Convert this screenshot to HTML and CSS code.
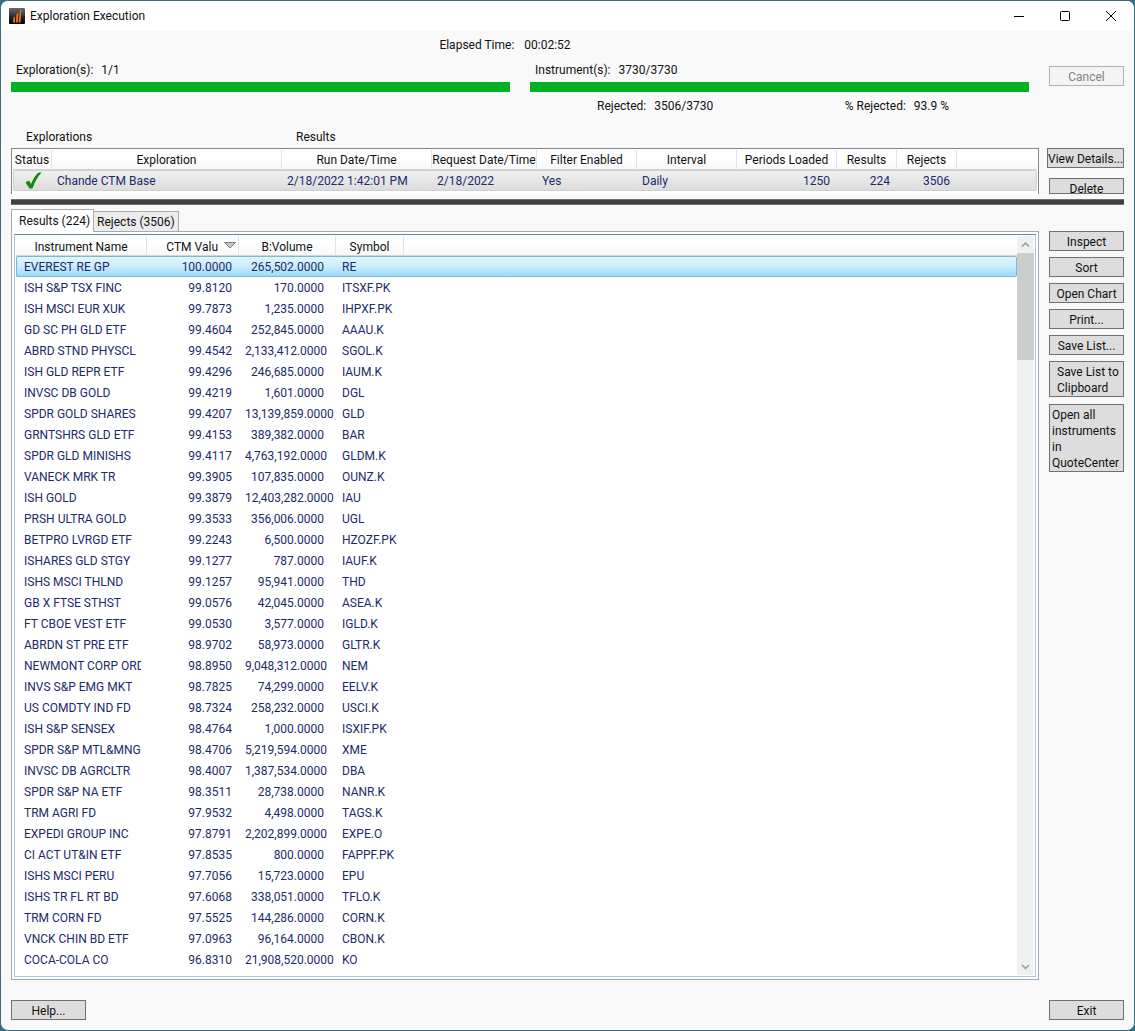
FILE: index.html
```html
<!DOCTYPE html>
<html lang="en">
<head>
  <meta charset="UTF-8" />
  <meta name="viewport" content="width=device-width, initial-scale=1.0" />
  <title>Exploration Execution</title>
  <link rel="stylesheet" href="styles.css">
</head>
<body>
  <div class="window">
    <header class="titlebar">
      <svg class="app-icon" viewBox="0 0 16 16" width="16" height="16">
        <defs>
          <linearGradient id="iconBg" x1="0" y1="0" x2="0" y2="1">
            <stop offset="0" stop-color="#6a6a6a" />
            <stop offset="0.6" stop-color="#222" />
            <stop offset="1" stop-color="#000" />
          </linearGradient>
        </defs>
        <rect width="16" height="16" rx="1" fill="url(#iconBg)" />
        <path d="M4.500 9.500l1.500-1v6H4z M7.500 6l2-1.500-.8 10H6.800z M11 2.500l1.500-1L11.500 14.500H9.500z" fill="#e8761c" />
      </svg>
      <h1>Exploration Execution</h1>
      <div class="window-buttons">
        <button aria-label="Minimize"><svg width="12" height="12" viewBox="0 0 12 12"><path d="M1 6.500h10" /></svg></button>
        <button aria-label="Maximize"><svg width="12" height="12" viewBox="0 0 12 12"><rect x="1.500" y="1.500" width="9" height="9" rx="1" /></svg></button>
        <button aria-label="Close"><svg width="12" height="12" viewBox="0 0 12 12"><path d="M1 1l10 10M11 1L1 11" /></svg></button>
      </div>
    </header>

    <main class="content">
      <!-- Progress -->
      <section class="progress-area">
        <div class="progress-main">
          <p class="elapsed"><span>Elapsed Time:</span><span>00:02:52</span></p>
          <div class="progress-item">
            <p><span>Exploration(s):</span><span>1/1</span></p>
            <div class="bar"></div>
          </div>
          <div class="progress-item">
            <p><span>Instrument(s):</span><span>3730/3730</span></p>
            <div class="bar"></div>
            <div class="rejected">
              <p><span>Rejected:</span><span>3506/3730</span></p>
              <p><span>% Rejected:</span><span>93.9 %</span></p>
            </div>
          </div>
        </div>
        <div class="side cancel-side">
          <button class="btn" disabled>Cancel</button>
        </div>
      </section>

      <!-- Explorations -->
      <div class="labels"><span>Explorations</span><span>Results</span></div>
      <section class="explorations">
        <div class="exploration-box">
          <table class="grid exploration-grid">
            <colgroup>
              <col class="c-status"><col class="c-exploration"><col class="c-run"><col class="c-request"><col class="c-flag"><col class="c-flag"><col class="c-flag"><col class="c-count"><col class="c-count"><col>
            </colgroup>
            <thead>
              <tr><th>Status</th><th>Exploration</th><th>Run Date/Time</th><th>Request Date/Time</th><th>Filter Enabled</th><th>Interval</th><th>Periods Loaded</th><th>Results</th><th>Rejects</th><th></th></tr>
            </thead>
            <tbody>
              <tr class="inactive">
                <td class="status"><svg width="18" height="18" viewBox="0 0 18 18"><path d="M1.500 10.500l3.500-2 2 3.500C9 7 11.500 3 14.500 0.500h3C13.500 5 10.500 10.500 8.500 16.500H5.500z" fill="#138a13" /></svg></td>
                <td>Chande CTM Base</td><td>2/18/2022 1:42:01 PM</td><td>2/18/2022</td><td>Yes</td><td>Daily</td><td class="num">1250</td><td class="num">224</td><td class="num">3506</td><td></td>
              </tr>
            </tbody>
          </table>
        </div>
        <div class="side">
          <button class="btn details">View Details...</button>
          <button class="btn cut">Delete</button>
        </div>
      </section>

      <div class="splitter"></div>

      <!-- Results -->
      <section class="results">
        <div class="tab-area">
          <div class="tabs" role="tablist">
            <button class="tab active" role="tab" aria-selected="true">Results (224)</button>
            <button class="tab" role="tab" aria-selected="false">Rejects (3506)</button>
          </div>
          <div class="tab-panel">
            <div class="list">
              <div class="list-view">
                <table class="grid result-grid">
                  <colgroup>
                    <col class="c-name"><col class="c-value"><col class="c-volume"><col class="c-symbol"><col>
                  </colgroup>
                  <thead>
                    <tr>
                      <th>Instrument Name</th>
                      <th class="sorted">CTM Valu<svg class="sort-arrow" width="12" height="7" viewBox="0 0 12 7"><path d="M.5.5h11L6 6z" fill="#c4c4c4" stroke="#808080" /></svg></th>
                      <th>B:Volume</th>
                      <th>Symbol</th>
                      <th></th>
                    </tr>
                  </thead>
                  <tbody>
                    <tr class="selected"><td><span>EVEREST RE GP</span></td><td>100.0000</td><td>265,502.0000</td><td>RE</td><td></td></tr>
                    <tr><td><span>ISH S&amp;P TSX FINC</span></td><td>99.8120</td><td>170.0000</td><td>ITSXF.PK</td><td></td></tr>
                    <tr><td><span>ISH MSCI EUR XUK</span></td><td>99.7873</td><td>1,235.0000</td><td>IHPXF.PK</td><td></td></tr>
                    <tr><td><span>GD SC PH GLD ETF</span></td><td>99.4604</td><td>252,845.0000</td><td>AAAU.K</td><td></td></tr>
                    <tr><td><span>ABRD STND PHYSCL</span></td><td>99.4542</td><td>2,133,412.0000</td><td>SGOL.K</td><td></td></tr>
                    <tr><td><span>ISH GLD REPR ETF</span></td><td>99.4296</td><td>246,685.0000</td><td>IAUM.K</td><td></td></tr>
                    <tr><td><span>INVSC DB GOLD</span></td><td>99.4219</td><td>1,601.0000</td><td>DGL</td><td></td></tr>
                    <tr><td><span>SPDR GOLD SHARES</span></td><td>99.4207</td><td>13,139,859.0000</td><td>GLD</td><td></td></tr>
                    <tr><td><span>GRNTSHRS GLD ETF</span></td><td>99.4153</td><td>389,382.0000</td><td>BAR</td><td></td></tr>
                    <tr><td><span>SPDR GLD MINISHS</span></td><td>99.4117</td><td>4,763,192.0000</td><td>GLDM.K</td><td></td></tr>
                    <tr><td><span>VANECK MRK TR</span></td><td>99.3905</td><td>107,835.0000</td><td>OUNZ.K</td><td></td></tr>
                    <tr><td><span>ISH GOLD</span></td><td>99.3879</td><td>12,403,282.0000</td><td>IAU</td><td></td></tr>
                    <tr><td><span>PRSH ULTRA GOLD</span></td><td>99.3533</td><td>356,006.0000</td><td>UGL</td><td></td></tr>
                    <tr><td><span>BETPRO LVRGD ETF</span></td><td>99.2243</td><td>6,500.0000</td><td>HZOZF.PK</td><td></td></tr>
                    <tr><td><span>ISHARES GLD STGY</span></td><td>99.1277</td><td>787.0000</td><td>IAUF.K</td><td></td></tr>
                    <tr><td><span>ISHS MSCI THLND</span></td><td>99.1257</td><td>95,941.0000</td><td>THD</td><td></td></tr>
                    <tr><td><span>GB X FTSE STHST</span></td><td>99.0576</td><td>42,045.0000</td><td>ASEA.K</td><td></td></tr>
                    <tr><td><span>FT CBOE VEST ETF</span></td><td>99.0530</td><td>3,577.0000</td><td>IGLD.K</td><td></td></tr>
                    <tr><td><span>ABRDN ST PRE ETF</span></td><td>98.9702</td><td>58,973.0000</td><td>GLTR.K</td><td></td></tr>
                    <tr><td><span>NEWMONT CORP ORD</span></td><td>98.8950</td><td>9,048,312.0000</td><td>NEM</td><td></td></tr>
                    <tr><td><span>INVS S&amp;P EMG MKT</span></td><td>98.7825</td><td>74,299.0000</td><td>EELV.K</td><td></td></tr>
                    <tr><td><span>US COMDTY IND FD</span></td><td>98.7324</td><td>258,232.0000</td><td>USCI.K</td><td></td></tr>
                    <tr><td><span>ISH S&amp;P SENSEX</span></td><td>98.4764</td><td>1,000.0000</td><td>ISXIF.PK</td><td></td></tr>
                    <tr><td><span>SPDR S&amp;P MTL&amp;MNG</span></td><td>98.4706</td><td>5,219,594.0000</td><td>XME</td><td></td></tr>
                    <tr><td><span>INVSC DB AGRCLTR</span></td><td>98.4007</td><td>1,387,534.0000</td><td>DBA</td><td></td></tr>
                    <tr><td><span>SPDR S&amp;P NA ETF</span></td><td>98.3511</td><td>28,738.0000</td><td>NANR.K</td><td></td></tr>
                    <tr><td><span>TRM AGRI FD</span></td><td>97.9532</td><td>4,498.0000</td><td>TAGS.K</td><td></td></tr>
                    <tr><td><span>EXPEDI GROUP INC</span></td><td>97.8791</td><td>2,202,899.0000</td><td>EXPE.O</td><td></td></tr>
                    <tr><td><span>CI ACT UT&amp;IN ETF</span></td><td>97.8535</td><td>800.0000</td><td>FAPPF.PK</td><td></td></tr>
                    <tr><td><span>ISHS MSCI PERU</span></td><td>97.7056</td><td>15,723.0000</td><td>EPU</td><td></td></tr>
                    <tr><td><span>ISHS TR FL RT BD</span></td><td>97.6068</td><td>338,051.0000</td><td>TFLO.K</td><td></td></tr>
                    <tr><td><span>TRM CORN FD</span></td><td>97.5525</td><td>144,286.0000</td><td>CORN.K</td><td></td></tr>
                    <tr><td><span>VNCK CHIN BD ETF</span></td><td>97.0963</td><td>96,164.0000</td><td>CBON.K</td><td></td></tr>
                    <tr><td><span>COCA-COLA CO</span></td><td>96.8310</td><td>21,908,520.0000</td><td>KO</td><td></td></tr>
                    <tr><td><span>TRM SOYBEAN FD</span></td><td>96.7988</td><td>61,864.0000</td><td>SOYB.K</td><td></td></tr>
                  </tbody>
                </table>
              </div>
              <div class="scrollbar">
                <svg width="17" height="17" viewBox="0 0 17 17"><path d="M5 10.500L8.500 7l3.500 3.500" /></svg>
                <div class="thumb"></div>
                <svg class="down" width="17" height="17" viewBox="0 0 17 17"><path d="M5 7l3.500 3.500L12 7" /></svg>
              </div>
            </div>
          </div>
        </div>
        <div class="side result-actions">
          <button class="btn">Inspect</button>
          <button class="btn">Sort</button>
          <button class="btn">Open Chart</button>
          <button class="btn">Print...</button>
          <button class="btn">Save List...</button>
          <button class="btn multi">Save List to Clipboard</button>
          <button class="btn multi tall">Open all instruments in QuoteCenter</button>
        </div>
      </section>

      <footer class="footer">
        <button class="btn">Help...</button>
        <button class="btn">Exit</button>
      </footer>
    </main>
  </div>
</body>
</html>
```
FILE: styles.css
```css
* {
  box-sizing: border-box;
  margin: 0;
  padding: 0;
}

body {
  height: 100vh;
  background: #2b6f89;
  font-family: Roboto, "Open Sans", sans-serif;
  font-size: 12px;
  line-height: 16px;
  color: #111;
}

.window {
  display: flex;
  flex-direction: column;
  height: 100%;
  border: 1px solid #3f6b7c;
  border-radius: 8px;
  background: #f9f9f9;
  overflow: hidden;
}

button {
  font: inherit;
  color: inherit;
}

/* title bar */
.titlebar {
  display: flex;
  align-items: center;
  height: 30px;
  padding-left: 8px;
  background: #fff;
}

.titlebar h1 {
  flex: 1;
  margin-left: 5px;
  font-size: 12px;
  font-weight: normal;
}

.window-buttons {
  display: flex;
}

.window-buttons button {
  display: flex;
  align-items: center;
  justify-content: center;
  width: 46px;
  height: 30px;
  border: none;
  background: none;
}

.window-buttons svg {
  fill: none;
  stroke: #000;
}

.content {
  flex: 1;
  display: flex;
  flex-direction: column;
  min-height: 0;
  padding: 0 10px 10px;
}

/* progress */
.progress-area {
  display: flex;
  height: 98px;
}

.progress-main {
  flex: 1;
  display: grid;
  grid-template-columns: 1fr 1fr;
  grid-template-rows: 31px 1fr;
  column-gap: 20px;
}

.progress-area p {
  display: flex;
  gap: 8px;
}

.progress-area .elapsed {
  grid-column: 1 / 3;
  justify-content: center;
  gap: 10px;
  padding: 6px 30px 0 0;
}

.progress-item > p {
  padding-left: 5px;
}

.bar {
  height: 10px;
  margin-top: 4px;
  background: #06b025;
}

.rejected {
  display: flex;
  justify-content: space-between;
  padding: 6px 80px 0 67px;
}

.side {
  display: flex;
  flex-direction: column;
  align-items: flex-end;
  flex: none;
  width: 85px;
}

.cancel-side {
  width: 95px;
  padding-top: 35px;
}

.btn {
  width: 75px;
  height: 20px;
  padding-top: 2px;
  border: 1px solid #707070;
  background: #ddd;
  white-space: nowrap;
}

.btn:disabled {
  border-color: #adb2b5;
  background: #f4f4f4;
  color: #838383;
}

.btn.details {
  width: 77px;
  margin-bottom: 10px;
}

.btn.cut {
  height: 16px;
  overflow: hidden;
}

.btn.multi {
  height: 36px;
  padding: 2px 1px 0 7px;
  text-align: left;
  white-space: normal;
}

.btn.tall {
  height: 68px;
  padding: 2px 2px 0;
}

/* explorations */
.labels {
  display: flex;
  padding-left: 15px;
  height: 19px;
}

.labels span:first-child {
  width: 270px;
}

.explorations {
  display: flex;
  height: 46px;
}

.exploration-box {
  flex: 1;
  padding: 1px;
  border: 1px solid #828790;
  border-bottom: none;
  background: #fff;
}

.splitter {
  flex: none;
  height: 6px;
  margin: 5px 0 4px;
  border: solid #707070;
  border-width: 1px 0;
  background: #404040;
}

/* tables */
.grid {
  width: 100%;
  table-layout: fixed;
  border-collapse: separate;
  border-spacing: 0;
  white-space: nowrap;
}

.grid th {
  height: 20px;
  border-right: 1px solid #e0e3e6;
  border-bottom: 1px solid #d5d5d5;
  background: linear-gradient(#fff 40%, #f7f8f9);
  font-weight: normal;
}

.grid th:last-child {
  border-right: none;
}

.grid td {
  height: 21px;
  padding: 0 7px 0 5px;
  border: solid transparent;
  border-width: 1px 0;
  color: #1c2a6b;
}

.grid td:first-child {
  border-left-width: 1px;
  border-radius: 2px 0 0 2px;
}

.grid td:last-child {
  border-right-width: 1px;
  border-radius: 0 2px 2px 0;
}

.c-status { width: 39px; }
.c-exploration { width: 230px; }
.c-run { width: 150px; }
.c-request { width: 105px; }
.c-flag { width: 100px; }
.c-count { width: 60px; }

.inactive td {
  border-color: #cfcfcf;
  background: linear-gradient(#f0f0f0, #dcdcdc);
}

.inactive .status {
  padding: 0 0 0 10px;
}

.status svg {
  display: block;
}

.grid .num {
  text-align: right;
}

/* results */
.results {
  flex: 1;
  display: flex;
  min-height: 0;
}

.tab-area {
  flex: 1;
  display: flex;
  flex-direction: column;
  min-width: 0;
}

.tabs {
  display: flex;
  align-items: flex-end;
  height: 22px;
}

.tab {
  height: 20px;
  padding: 0 3px;
  border: 1px solid #acacac;
  border-left: none;
  border-bottom: none;
  background: #ececec;
}

.tab.active {
  height: 23px;
  margin-bottom: -1px;
  padding: 0 3px 0 7px;
  border-left: 1px solid #acacac;
  background: #fff;
  z-index: 1;
}

.tab-panel {
  flex: 1;
  min-height: 0;
  padding: 2px;
  border: 1px solid #a5a8ad;
  background: #fff;
}

.list {
  display: flex;
  height: 100%;
  padding: 1px;
  border: 1px solid #abc8de;
  border-top-color: #5c86a5;
}

.list-view {
  flex: 1;
  overflow: hidden;
}

.c-name { width: 131px; }
.c-value { width: 92px; }
.c-volume { width: 97px; }
.c-symbol { width: 68px; }

.result-grid th {
  height: 20px;
  padding-top: 2px;
}

.result-grid td {
  padding: 0 7px 0 6px;
}

.result-grid td:first-child {
  padding: 0 6px 0 7px;
}

.result-grid td:first-child span {
  display: block;
  overflow: hidden;
}

.result-grid td:nth-child(2),
.result-grid td:nth-child(3) {
  text-align: right;
}

.result-grid td:nth-child(3) {
  padding: 0 12px 0 6px;
}

.result-grid .sorted {
  text-align: right;
  padding-right: 2px;
}

.sort-arrow {
  margin-left: 6px;
  vertical-align: 2px;
}

.selected td {
  border-color: #7fb4dc;
  background: linear-gradient(#e5f6fd, #c8edfc 50%, #9cdcf8);
}

.scrollbar {
  display: flex;
  flex-direction: column;
  width: 17px;
  background: #f0f0f0;
}

.scrollbar svg {
  flex: none;
  fill: none;
  stroke: #999;
  stroke-width: 1.500;
}

.scrollbar .thumb {
  height: 107px;
  background: #cdcdcd;
}

.scrollbar .down {
  margin-top: auto;
}

.result-actions {
  gap: 6px;
  padding-top: 22px;
}

.result-actions .tall {
  margin-top: 1px;
}

.footer {
  display: flex;
  justify-content: space-between;
  padding-top: 20px;
}
```
